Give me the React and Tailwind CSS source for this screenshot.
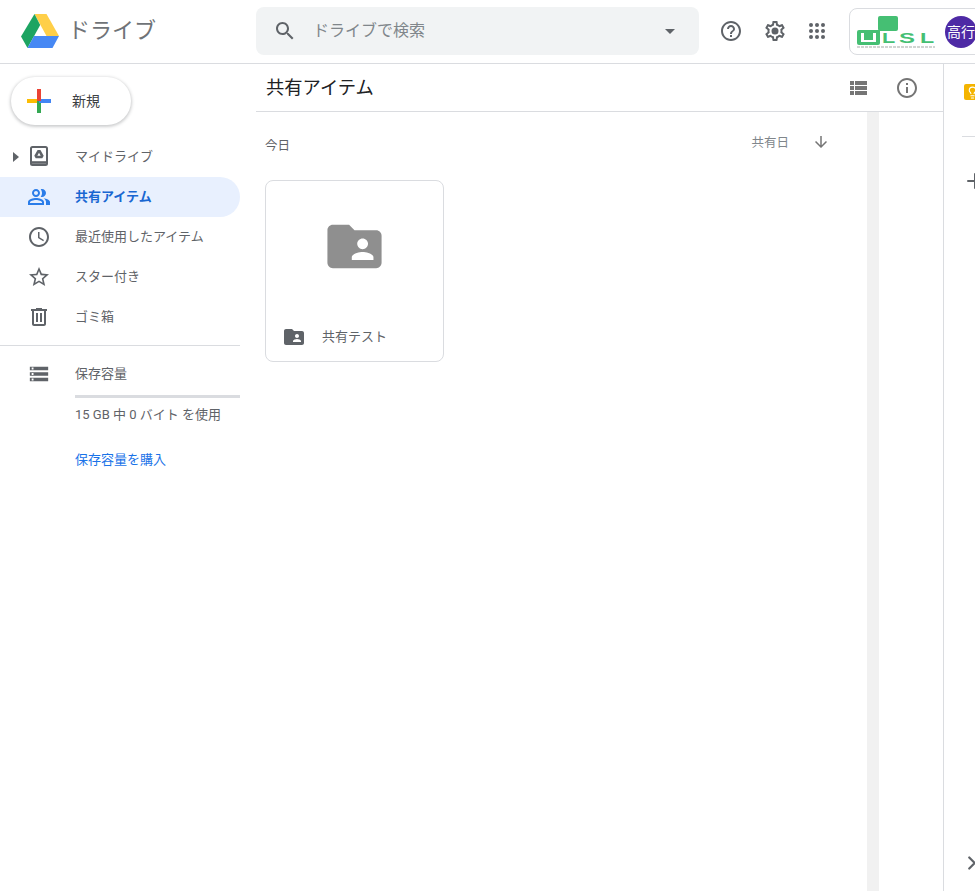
import { ChevronRight, Lightbulb, Plus } from "lucide-react"

const P = {
  help: "M11 18h2v-2h-2v2zm1-16C6.48 2 2 6.48 2 12s4.48 10 10 10 10-4.48 10-10S17.52 2 12 2zm0 18c-4.41 0-8-3.59-8-8s3.59-8 8-8 8 3.59 8 8-3.59 8-8 8zm0-14c-2.21 0-4 1.79-4 4h2c0-1.1.9-2 2-2s2 .9 2 2c0 2-3 1.75-3 5h2c0-2.25 3-2.5 3-5 0-2.21-1.79-4-4-4z",
  gear: "M19.43 12.98c.04-.32.07-.64.07-.98 0-.34-.03-.66-.07-.98l2.11-1.65c.19-.15.24-.42.12-.64l-2-3.46c-.09-.16-.26-.25-.44-.25-.06 0-.12.01-.17.03l-2.49 1c-.52-.4-1.08-.73-1.69-.98l-.38-2.65C14.46 2.18 14.25 2 14 2h-4c-.25 0-.46.18-.49.42l-.38 2.65c-.61.25-1.17.59-1.69.98l-2.49-1c-.06-.02-.12-.03-.18-.03-.17 0-.34.09-.43.25l-2 3.46c-.13.22-.07.49.12.64l2.11 1.65c-.04.32-.07.65-.07.98 0 .33.03.66.07.98l-2.11 1.65c-.19.15-.24.42-.12.64l2 3.46c.09.16.26.25.44.25.06 0 .12-.01.17-.03l2.49-1c.52.4 1.08.73 1.69.98l.38 2.65c.03.24.24.42.49.42h4c.25 0 .46-.18.49-.42l.38-2.65c.61-.25 1.17-.59 1.69-.98l2.49 1c.06.02.12.03.18.03.17 0 .34-.09.43-.25l2-3.46c.12-.22.07-.49-.12-.64l-2.11-1.65zm-1.98-1.71c.04.31.05.52.05.73 0 .21-.02.43-.05.73l-.14 1.13.89.7 1.08.84-.7 1.21-1.27-.51-1.04-.42-.9.68c-.43.32-.84.56-1.25.73l-1.06.43-.16 1.13-.2 1.35h-1.4l-.19-1.35-.16-1.13-1.06-.43c-.43-.18-.83-.41-1.23-.71l-.91-.7-1.06.43-1.27.51-.7-1.21 1.08-.84.89-.7-.14-1.13c-.03-.31-.05-.54-.05-.74s.02-.43.05-.73l.14-1.13-.89-.7-1.08-.84.7-1.21 1.27.51 1.04.42.9-.68c.43-.32.84-.56 1.25-.73l1.06-.43.16-1.13.2-1.35h1.39l.19 1.35.16 1.13 1.06.43c.43.18.83.41 1.23.71l.91.7 1.06-.43 1.27-.51.7 1.21-1.07.85-.89.7.14 1.13zM12 8.5a3.5 3.5 0 1 0 0 7 3.5 3.5 0 0 0 0-7z",
  search: "M15.5 14h-.79l-.28-.27C15.41 12.59 16 11.11 16 9.5 16 5.91 13.09 3 9.5 3S3 5.91 3 9.5 5.91 16 9.5 16c1.61 0 3.09-.59 4.23-1.57l.27.28v.79l5 4.99L20.49 19l-4.99-5zm-6 0C7.01 14 5 11.99 5 9.5S7.01 5 9.5 5 14 7.01 14 9.5 11.99 14 9.5 14z",
  people: "M16.67 13.13C18.04 14.06 19 15.32 19 17v3h4v-3c0-2.18-3.57-3.47-6.33-3.87zM15 12c2.21 0 4-1.79 4-4s-1.79-4-4-4c-.47 0-.91.1-1.33.24C14.5 5.27 15 6.58 15 8s-.5 2.73-1.33 3.76c.42.14.86.24 1.33.24zM9 12c2.21 0 4-1.79 4-4s-1.79-4-4-4-4 1.79-4 4 1.79 4 4 4zm0-6c1.1 0 2 .9 2 2s-.9 2-2 2-2-.9-2-2 .9-2 2-2zM9 13c-2.67 0-8 1.34-8 4v3h16v-3c0-2.66-5.33-4-8-4zm6 5H3v-.99C3.2 16.29 6.3 15 9 15s5.8 1.29 6 2z",
  clock: "M11.99 2C6.47 2 2 6.48 2 12s4.47 10 9.99 10C17.52 22 22 17.52 22 12S17.52 2 11.99 2zM12 20c-4.42 0-8-3.58-8-8s3.58-8 8-8 8 3.58 8 8-3.58 8-8 8zm.5-13H11v6l5.25 3.15.75-1.23-4.5-2.67z",
  star: "M22 9.24l-7.19-.62L12 2 9.19 8.63 2 9.24l5.46 4.73L5.82 21 12 17.27 18.18 21l-1.63-7.03L22 9.24zM12 15.4l-3.76 2.27 1-4.28-3.32-2.88 4.38-.38L12 6.1l1.71 4.04 4.38.38-3.32 2.88 1 4.28L12 15.4z",
  trash: "M15 4V3H9v1H4v2h1v13c0 1.1.9 2 2 2h10c1.1 0 2-.9 2-2V6h1V4h-5zm2 15H7V6h10v13zM9 8h2v9H9zm4 0h2v9h-2z",
  storage: "M2 20h20v-4H2v4zm2-3h2v2H4v-2zM2 4v4h20V4H2zm4 3H4V5h2v2zm-4 7h20v-4H2v4zm2-3h2v2H4v-2z",
  list: "M4 14h4v-4H4v4zm0 5h4v-4H4v4zM4 9h4V5H4v4zm5 5h12v-4H9v4zm0 5h12v-4H9v4zM9 5v4h12V5H9z",
  info: "M11 7h2v2h-2zm0 4h2v6h-2zm1-9C6.48 2 2 6.48 2 12s4.48 10 10 10 10-4.48 10-10S17.52 2 12 2zm0 18c-4.41 0-8-3.59-8-8s3.59-8 8-8 8 3.59 8 8-3.59 8-8 8z",
  arrow: "M20 12l-1.41-1.41L13 16.17V4h-2v12.17l-5.58-5.59L4 12l8 8 8-8z",
  folder: "M20 6h-8l-2-2H4c-1.1 0-1.99.9-1.99 2L2 18c0 1.1.9 2 2 2h16c1.1 0 2-.9 2-2V8c0-1.1-.9-2-2-2zm-5 3c1.1 0 2 .9 2 2s-.9 2-2 2-2-.9-2-2 .9-2 2-2zm4 8h-8v-1c0-1.33 2.67-2 4-2s4 .67 4 2v1z",
}

const Icon = ({ d, className }) => (
  <svg viewBox="0 0 24 24" fill="currentColor" fillRule="evenodd" className={className}>
    <path d={d} />
  </svg>
)

const DriveLogo = () => (
  <svg viewBox="0 0 38 34" className="w-[38px] h-[34px]">
    <path d="M13.5 0H25.500L38 22H25.500z" fill="#ffcf48" />
    <path d="M13.500 0L0 22.500 6.500 34 19.200 11z" fill="#1da462" />
    <path d="M6.500 34H31.500L38 22H13z" fill="#4688f4" />
  </svg>
)

const NewPlus = () => (
  <svg viewBox="0 0 24 24" className="w-6 h-6">
    <rect x="0" y="10" width="12" height="4" fill="#fbbc04" />
    <rect x="10" y="12" width="4" height="12" fill="#34a853" />
    <rect x="12" y="10" width="12" height="4" fill="#4285f4" />
    <rect x="10" y="0" width="4" height="12" fill="#ea4335" />
  </svg>
)

const MyDriveIcon = () => (
  <svg viewBox="0 0 24 24" className="w-6 h-6 -mt-[2px] text-[#5f6368]" fill="none">
    <rect x="4" y="3" width="16" height="18" rx="1.500" stroke="currentColor" strokeWidth="2" />
    <path d="M4 18.500h16" stroke="currentColor" strokeWidth="2.600" />
    <path d="M10.600 6h2.800l3.300 5.800-1.400 2.400H8.700l-1.400-2.400z" fill="currentColor" />
    <path d="M12 8.800l-1.700 3h3.400z" fill="#fff" />
  </svg>
)

const UlslLogo = () => (
  <svg viewBox="0 0 78 32" className="w-[78px] h-8 shrink-0 mt-px">
    <rect x="21" y="0" width="20" height="15" rx="2" fill="#45bf73" />
    <path d="M0 16a2 2 0 0 1 2-2h21v13a2 2 0 0 1-2 2H2a2 2 0 0 1-2-2z" fill="#45bf73" />
    <path d="M4 17h3v7h9v-7h3v9H4z" fill="#fff" />
    <g fontFamily="Liberation Sans" fontWeight="700" fontSize="15" fill="#45bf73">
      <text transform="translate(25 27) scale(1.45 1)">L</text>
      <text transform="translate(42 27) scale(1.6 1)">S</text>
      <text transform="translate(63 27) scale(1.55 1)">L</text>
    </g>
    <path d="M0 31h78" stroke="#a3aaa6" strokeWidth="1.200" strokeDasharray="3 1" />
  </svg>
)

const nav = [
  { label: "マイドライブ", icon: <MyDriveIcon />, caret: true },
  { label: "共有アイテム", icon: <Icon d={P.people} className="w-6 h-6 text-[#2b7de9]" />, active: true },
  { label: "最近使用したアイテム", icon: <Icon d={P.clock} className="w-6 h-6" /> },
  { label: "スター付き", icon: <Icon d={P.star} className="w-6 h-6" /> },
  { label: "ゴミ箱", icon: <Icon d={P.trash} className="w-6 h-6" /> },
]

export default function App() {
  return (
    <div className="w-[975px] h-[891px] overflow-hidden bg-white flex flex-col text-[#5f6368] font-['Roboto','Noto_Sans_CJK_JP',sans-serif]">
      <header className="h-16 shrink-0 flex items-center border-b border-[#dadce0] pb-px">
        <div className="w-[256px] shrink-0 flex items-center pl-[21px]">
          <DriveLogo />
          <span className="ml-[9px] text-[22px] leading-none text-[#6f7377]">ドライブ</span>
        </div>
        <div className="w-[443px] h-12 shrink-0 rounded-lg bg-[#f1f3f4] flex items-center pl-[17px] pr-[24px]">
          <Icon d={P.search} className="w-6 h-6" />
          <span className="ml-4 flex-1 text-base text-[#80868b]">ドライブで検索</span>
          <span className="w-0 h-0 border-x-[5px] border-x-transparent border-t-[5px] border-t-[#5f6368]" />
        </div>
        <Icon d={P.help} className="w-6 h-6 ml-5 shrink-0" />
        <Icon d={P.gear} className="w-6 h-6 ml-5 shrink-0" />
        <svg viewBox="0 0 24 24" fill="currentColor" className="w-6 h-6 ml-[18px] shrink-0">
          {[6, 12, 18].flatMap(y => [6, 12, 18].map(x => <circle key={`${x}-${y}`} cx={x} cy={y} r="2" />))}
        </svg>
        <div className="ml-5 w-[140px] h-[47px] shrink-0 border border-[#dadce0] rounded-lg flex items-center pl-[7px]">
          <UlslLogo />
          <div className="ml-[10px] mt-[2px] w-8 h-8 shrink-0 rounded-full bg-[#4e2aa5] text-white text-[14px] flex items-center justify-center">高行</div>
        </div>
      </header>

      <div className="flex-1 flex min-h-0">
        <aside className="w-[256px] shrink-0">
          <div className="pt-[13px] pl-[11px]">
            <button className="w-[120px] h-12 rounded-full bg-white shadow-[0_1px_3px_1px_rgba(60,64,67,0.25)] flex items-center pl-4 text-[14px] text-[#3c4043]">
              <NewPlus />
              <span className="ml-[21px]">新規</span>
            </button>
          </div>
          <nav className="mt-3 w-[240px]">
            {nav.map(n => (
              <div key={n.label} className={`relative h-10 flex items-center pl-[27px] rounded-r-full ${n.active ? "bg-[#e8f0fe] text-[#1967d2] font-bold" : ""}`}>
                {n.caret && <span className="absolute left-[13px] w-0 h-0 border-y-[5px] border-y-transparent border-l-[6px] border-l-[#5f6368]" />}
                {n.icon}
                <span className="ml-6 text-[13px]">{n.label}</span>
              </div>
            ))}
          </nav>
          <div className="mt-2 w-[240px] border-t border-[#dadce0] pt-[17px]">
            <div className="flex items-center pl-[28px] h-[22px]">
              <Icon d={P.storage} className="w-[22px] h-[22px]" />
              <span className="ml-[25px] text-[13px]">保存容量</span>
            </div>
            <div className="ml-[75px] mt-[10px] h-[3px] bg-[#dadce0]" />
            <p className="ml-[75px] mt-[7px] text-[13px]">15 GB 中 0 バイト を使用</p>
            <p className="ml-[75px] mt-[25px] text-[13px] text-[#1a73e8]">保存容量を購入</p>
          </div>
        </aside>

        <main className="w-[687px] shrink-0 flex flex-col">
          <div className="h-12 shrink-0 flex items-center border-b border-[#dadce0] pl-[10px]">
            <h1 className="flex-1 text-[18.3px] text-[#202124]">共有アイテム</h1>
            <Icon d={P.list} className="w-6 h-6 text-[#757575]" />
            <Icon d={P.info} className="w-6 h-6 ml-[25px] mr-6 text-[#757575]" />
          </div>
          <div className="flex-1 flex min-h-0">
            <div className="w-[611px] shrink-0 pl-[9px]">
              <div className="flex items-start h-[68px]">
                <span className="mt-[25px] flex-1 text-[12.5px] leading-[18px]">今日</span>
                <span className="mt-[22px] text-[12.5px] leading-[18px] text-[#80868b]">共有日</span>
                <Icon d={P.arrow} className="mt-[18px] ml-5 mr-[34px] w-[24px] h-[24px] scale-75 text-[#757575]" />
              </div>
              <div className="w-[179px] h-[182px] border border-[#dadce0] rounded-lg flex flex-col">
                <div className="pt-[33px] flex justify-center">
                  <Icon d={P.folder} className="w-[65px] h-[65px] text-[#8f8f8f]" />
                </div>
                <div className="mt-auto mb-3 flex items-center pl-4 text-[13px]">
                  <Icon d={P.folder} className="w-6 h-6" />
                  <span className="ml-4">共有テスト</span>
                </div>
              </div>
            </div>
            <div className="w-3 shrink-0 bg-[#f1f1f1]" />
          </div>
        </main>

        <aside className="flex-1 min-w-0 border-l border-[#dadce0] flex flex-col">
          <div className="mt-5 ml-5 w-4 h-4 shrink-0 rounded-[2px] bg-[#f4b400] flex items-center justify-center text-white">
            <Lightbulb size={13} />
          </div>
          <div className="mt-9 ml-[18px] h-px shrink-0 bg-[#dadce0]" />
          <Plus size={24} strokeWidth={2} className="mt-8 ml-[19px] shrink-0 text-[#5f6368]" />
          <ChevronRight size={22} strokeWidth={2.4} className="mt-auto mb-[17px] ml-[17px] shrink-0 text-[#5f6368]" />
        </aside>
      </div>
    </div>
  )
}
